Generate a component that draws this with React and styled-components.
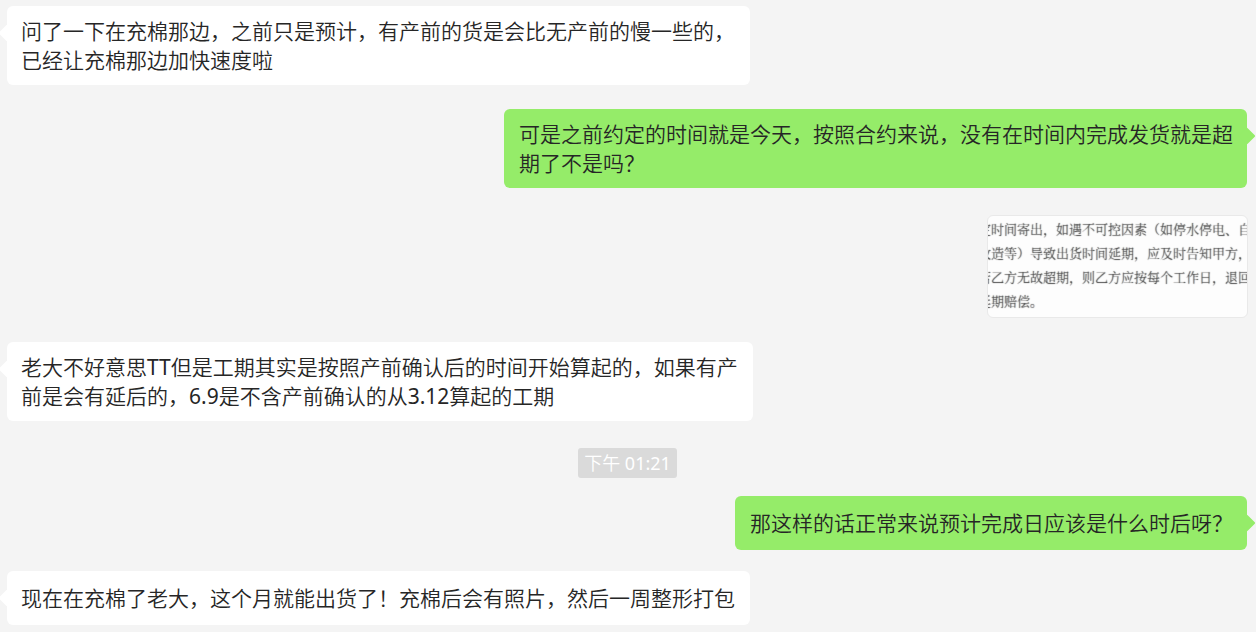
import React from "react";
import styled, { createGlobalStyle } from "styled-components";

const GlobalStyle = createGlobalStyle`
  body {
    margin: 0;
    background: #f4f4f4;
    color: #262626;
    font-family: "Noto Sans", "Noto Sans CJK SC DemiLight", "Noto Sans CJK SC", sans-serif;
    font-weight: 400;
  }
`;

const Conversation = styled.main`
  display: flex;
  flex-direction: column;
  padding: 6px 8px 7px 7px;
`;

const Row = styled.div`
  display: flex;
  justify-content: ${({ $side }) =>
    $side === "right" ? "flex-end" : $side === "left" ? "flex-start" : "center"};
  margin-bottom: ${({ $gap }) => $gap}px;
`;

const Bubble = styled.p`
  position: relative;
  display: flex;
  align-items: center;
  box-sizing: border-box;
  min-height: 54px;
  margin: 0 ${({ $own }) => ($own ? 1 : 0)}px 0 0;
  padding: ${({ $own }) => ($own ? "11px 14px 10px 15px" : "11px 15px 10px 14px")};
  border-radius: 6px;
  background: ${({ $own }) => ($own ? "#95ec69" : "#ffffff")};
  font-size: 21px;
  line-height: 29px;
  white-space: pre-line;

  &::before {
    content: "";
    position: absolute;
    top: 21px;
    ${({ $own }) => ($own ? "right: -6px;" : "left: -6px;")}
    width: 12px;
    height: 12px;
    border-radius: 1px;
    background: inherit;
    transform: rotate(45deg);
  }
`;

const TimeStamp = styled.time`
  padding: 0 6px;
  border-radius: 3px;
  background: #dadada;
  color: #ffffff;
  font-size: 18px;
  line-height: 30px;
`;

const Photo = styled.figure`
  box-sizing: border-box;
  width: 261px;
  height: 103px;
  margin: 0;
  padding-top: 1px;
  overflow: hidden;
  border: 1px solid #e9e9e9;
  border-radius: 6px;
  background: #fdfdfd;
`;

const PhotoLine = styled.div`
  margin-left: -10px;
  color: #66666666;
  font-family: "Noto Serif CJK SC", "Noto Sans CJK SC", sans-serif;
  font-size: 13px;
  font-weight: 300;
  line-height: 24px;
  text-shadow: 0 0 1px #222222;
  white-space: nowrap;
`;

const contractLines = [
  "定时间寄出，如遇不可控因素（如停水停电、自然",
  "改造等）导致出货时间延期，应及时告知甲方，如",
  "若乙方无故超期，则乙方应按每个工作日，退回此",
  "延期赔偿。",
];

const messages = [
  {
    side: "left",
    gap: 24,
    text: "问了一下在充棉那边，之前只是预计，有产前的货是会比无产前的慢一些的，\n已经让充棉那边加快速度啦",
  },
  {
    side: "right",
    gap: 27,
    text: "可是之前约定的时间就是今天，按照合约来说，没有在时间内完成发货就是超\n期了不是吗？",
  },
  { side: "right", gap: 24, photo: contractLines },
  {
    side: "left",
    gap: 27,
    text: "老大不好意思TT但是工期其实是按照产前确认后的时间开始算起的，如果有产\n前是会有延后的，6.9是不含产前确认的从3.12算起的工期",
  },
  { side: "center", gap: 18, time: "下午 01:21" },
  { side: "right", gap: 21, text: "那这样的话正常来说预计完成日应该是什么时后呀？" },
  {
    side: "left",
    gap: 0,
    text: "现在在充棉了老大，这个月就能出货了！充棉后会有照片，然后一周整形打包",
  },
];

function Message({ side, gap, text, time, photo }) {
  return (
    <Row $side={side} $gap={gap}>
      {text && <Bubble $own={side === "right"}>{text}</Bubble>}
      {time && <TimeStamp dateTime="13:21">{time}</TimeStamp>}
      {photo && (
        <Photo>
          {photo.map((line) => (
            <PhotoLine key={line}>{line}</PhotoLine>
          ))}
        </Photo>
      )}
    </Row>
  );
}

export default function App() {
  return (
    <>
      <GlobalStyle />
      <Conversation lang="zh-CN">
        {messages.map((message, index) => (
          <Message key={index} {...message} />
        ))}
      </Conversation>
    </>
  );
}
